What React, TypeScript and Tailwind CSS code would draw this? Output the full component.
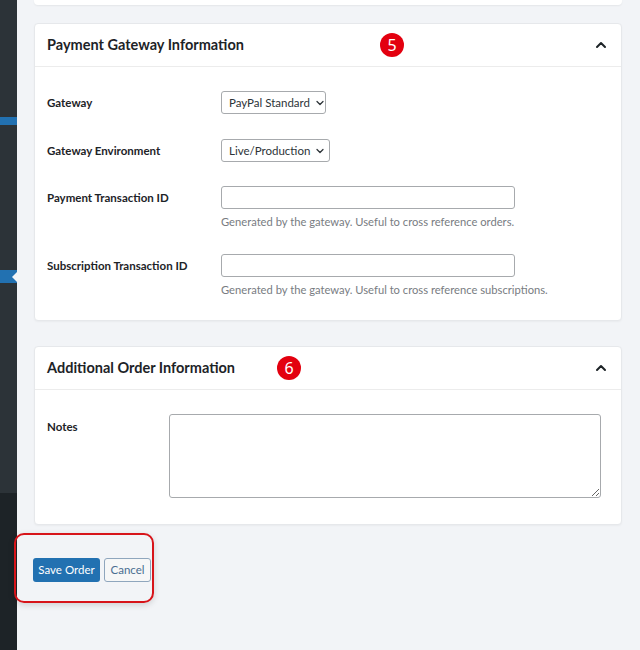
import { ChevronDown, ChevronUp } from "lucide-react";

const font = { fontFamily: 'Lato, "Noto Sans", sans-serif' };

function Badge({ n, className }: { n: string; className: string }) {
  return (
    <span
      className={`absolute top-1/2 -translate-y-1/2 flex h-[24px] w-[24px] items-center justify-center rounded-full bg-[#e3000f] text-[16px] leading-none text-white ${className}`}
      style={{ fontFamily: '"Noto Sans", sans-serif' }}
    >
      {n}
    </span>
  );
}

function CardHeader({ title, badge }: { title: string; badge: React.ReactNode }) {
  return (
    <div className="relative flex h-[43px] items-center justify-between border-b border-[#ececec] px-3">
      <h2 className="text-[14.5px] font-bold text-[#1d2327]">{title}</h2>
      {badge}
      <ChevronUp className="h-[16px] w-[16px] text-[#1d2327]" strokeWidth={3} />
    </div>
  );
}

function Select({ value, width }: { value: string; width: string }) {
  return (
    <div
      className={`flex h-[23px] items-center justify-between gap-1 whitespace-nowrap rounded-[3px] border border-[#a7aaad] bg-white pl-[7px] pr-[6px] text-[11.5px] text-[#2c3338] ${width}`}
    >
      <span>{value}</span>
      <ChevronDown className="h-[12px] w-[12px] shrink-0 text-[#2c3338]" strokeWidth={2.5} />
    </div>
  );
}

function Label({ children }: { children: React.ReactNode }) {
  return <div className="text-[11.5px] font-bold leading-[23px] text-[#1d2327]">{children}</div>;
}

export default function App() {
  return (
    <div className="flex h-[650px] w-[640px] overflow-hidden bg-[#f2f4f7]" style={font}>
      {/* admin sidebar sliver */}
      <div className="flex w-[17px] shrink-0 flex-col">
        <div className="h-[117px] bg-[#2c3338]" />
        <div className="relative h-[8px] bg-[#2271b1]" />
        <div className="h-[145px] bg-[#2c3338]" />
        <div className="relative h-[13px] bg-[#2271b1]">
          <span className="absolute right-0 top-[2px] h-0 w-0 border-y-[5px] border-r-[5px] border-y-transparent border-r-[#f2f4f7]" />
        </div>
        <div className="h-[210px] bg-[#2c3338]" />
        <div className="flex-1 bg-[#1d2327]" />
      </div>

      <main className="flex-1 px-[17px] pr-[18px]">
        <div className="h-[5px] rounded-b-[4px] bg-white shadow-[0_1px_2px_rgba(0,0,0,0.06)]" />

        {/* Payment gateway card */}
        <section className="mt-[18px] rounded-[4px] border border-[#e6e8eb] bg-white shadow-[0_1px_2px_rgba(0,0,0,0.04)]">
          <CardHeader
            title="Payment Gateway Information"
            badge={<Badge n="5" className="left-[345px]" />}
          />
          <div className="px-3 pb-[21px] pt-[24px]">
            <div className="grid grid-cols-[174px_1fr]">
              <Label>Gateway</Label>
              <Select value="PayPal Standard" width="w-[105px]" />
            </div>
            <div className="mt-[25px] grid grid-cols-[174px_1fr]">
              <Label>Gateway Environment</Label>
              <Select value="Live/Production" width="w-[109px]" />
            </div>
            <div className="mt-[24px] grid grid-cols-[174px_1fr]">
              <Label>Payment Transaction ID</Label>
              <div>
                <input className="block h-[23px] w-[294px] rounded-[3px] border border-[#a7aaad] bg-white" />
                <p className="mt-[4px] text-[11.2px] leading-[18px] text-[#787c82]">
                  Generated by the gateway. Useful to cross reference orders.
                </p>
              </div>
            </div>
            <div className="mt-[23px] grid grid-cols-[174px_1fr]">
              <Label>Subscription Transaction ID</Label>
              <div>
                <input className="block h-[23px] w-[294px] rounded-[3px] border border-[#a7aaad] bg-white" />
                <p className="mt-[4px] text-[11.2px] leading-[18px] text-[#787c82]">
                  Generated by the gateway. Useful to cross reference subscriptions.
                </p>
              </div>
            </div>
          </div>
        </section>

        {/* Additional info card */}
        <section className="mt-[25px] rounded-[4px] border border-[#e6e8eb] bg-white shadow-[0_1px_2px_rgba(0,0,0,0.04)]">
          <CardHeader
            title="Additional Order Information"
            badge={<Badge n="6" className="left-[242px]" />}
          />
          <div className="grid grid-cols-[122px_1fr] pb-[26px] pl-3 pr-[20px] pt-[24px]">
            <div className="pt-[2px] text-[11.5px] font-bold leading-[22px] text-[#1d2327]">Notes</div>
            <textarea className="block h-[84px] w-full resize-y rounded-[3px] border border-[#a7aaad] bg-white" />
          </div>
        </section>

        {/* actions */}
        <div className="relative mt-[33px] flex gap-[4px]">
          <div className="pointer-events-none absolute -left-[20px] -top-[25px] h-[70px] w-[140px] rounded-[10px] border-2 border-[#d7141a] shadow-[0_2px_6px_rgba(0,0,0,0.15)]" />
          <button className="-ml-[1px] h-[24px] w-[67px] rounded-[3px] bg-[#2271b1] text-[11.5px] text-white">
            Save Order
          </button>
          <button className="h-[24px] w-[47px] rounded-[3px] border border-[#8fa6bd] bg-[#f6f7f7] text-[11.5px] text-[#4a6e91]">
            Cancel
          </button>
        </div>
      </main>
    </div>
  );
}
